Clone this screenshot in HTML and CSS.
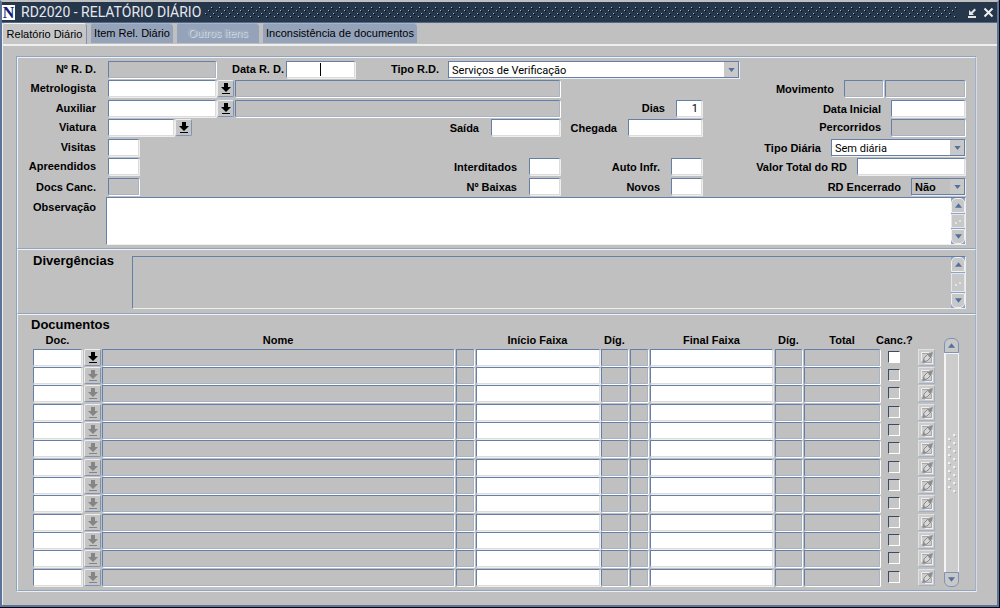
FILE: index.html
```html
<!DOCTYPE html>
<html lang="pt-BR">
<head>
<meta charset="utf-8">
<title>RD2020 - RELATÓRIO DIÁRIO</title>
<link rel="stylesheet" href="styles.css">
</head>
<body>
<svg class="defs" aria-hidden="true">
  <symbol id="lov" viewBox="0 0 10 12"><path d="M3 0h4v4h3L5 9 0 4h3zM1 10h8v1H1z" fill="currentColor"/></symbol>
  <symbol id="down" viewBox="0 0 8 5"><path d="M0 0h8L4 5z" fill="currentColor"/></symbol>
  <symbol id="up" viewBox="0 0 8 5"><path d="M0 5h8L4 0z" fill="currentColor"/></symbol>
  <symbol id="pencil" viewBox="0 0 14 14">
    <path d="M1 1h8v1H2v8H1zM12 6h1v7H5v-1h7z" fill="#eee"/>
    <path d="M2 2.500h6M11.500 7v4.500H4" fill="none" stroke="#a8a8a8"/>
    <path d="M3 11l1-4 4-4 3 3-4 4z" fill="#d8d8d8" stroke="#8c8c8c"/>
    <path d="M7 3l6-2-2 6-2-1-1-2zM2 12l4-1-2-3z" fill="#8c8c8c"/>
  </symbol>
</svg>
<div class="window">
  <header class="titlebar">
    <span class="logo" aria-hidden="true">N</span>
    <h1 class="title">RD2020 - RELATÓRIO DIÁRIO</h1>
    <svg class="grip" aria-hidden="true">
      <defs><pattern id="dots" width="8" height="12" patternUnits="userSpaceOnUse">
        <path d="M6 0h1v1H6zM3 3h1v1H3zM0 6h1v1H0zM5 9h1v1H5z" fill="#a7b5c7"/>
        <path d="M7 1h1v1H7zM4 4h1v1H4zM1 7h1v1H1zM6 10h1v1H6z" fill="#03080f"/>
      </pattern></defs>
      <rect width="100%" height="11" fill="url(#dots)"/>
    </svg>
    <button class="winbtn" aria-label="Minimizar"><svg width="11" height="11" viewBox="0 0 11 11"><path d="M1 9h8v2H1zM2 3v5h5L5.500 6.500 9 3 7.500 1.500 4 5z" fill="#e4e4e4"/></svg></button>
    <button class="winbtn" aria-label="Fechar"><svg width="11" height="11" viewBox="0 0 11 11"><path d="M1.500 1.500l8 8M9.500 1.500l-8 8" stroke="#f0f0f0" stroke-width="2"/></svg></button>
  </header>

  <nav class="tabs" role="tablist">
    <button class="tab tab-active" role="tab" aria-selected="true">Relatório Diário</button>
    <button class="tab" role="tab">Item Rel. Diário</button>
    <button class="tab tab-off" role="tab" disabled>Outros itens</button>
    <button class="tab tab-long" role="tab">Inconsistência de documentos</button>
  </nav>

  <main class="page">
    <div class="frame">
      <section class="block form">
        <div class="row">
          <label for="rd">Nº R. D.</label>
          <div class="wide">
            <input id="rd" class="field ro w-code" readonly>
            <label class="lbl-date" for="data">Data R. D.</label>
            <span class="datebox"><input id="data" class="field w-date"><i class="caret"></i></span>
            <label class="lbl-type" for="tipo">Tipo R.D.</label>
            <span class="combo w-type"><select id="tipo"><option>Serviços de Verificação</option></select><svg><use href="#down"/></svg></span>
          </div>
        </div>
        <div class="row">
          <label for="met">Metrologista</label>
          <div class="main"><input id="met" class="field w-code"><button class="lov" aria-label="Lista de metrologistas"><svg><use href="#lov"/></svg></button><input class="field ro grow" readonly aria-label="Nome do metrologista"></div>
          <div class="side"><label class="low" for="mov">Movimento</label><input id="mov" class="field ro w-mov" readonly><input class="field ro w-movname" readonly aria-label="Descrição do movimento"></div>
        </div>
        <div class="row">
          <label for="aux">Auxiliar</label>
          <div class="main"><input id="aux" class="field w-code"><button class="lov" aria-label="Lista de auxiliares"><svg><use href="#lov"/></svg></button><input class="field ro grow" readonly aria-label="Nome do auxiliar"></div>
          <div class="mid"><label for="dias">Dias</label><input id="dias" class="field num w-days" value="1"></div>
          <div class="side"><label class="low" for="ini">Data Inicial</label><input id="ini" class="field w-km"></div>
        </div>
        <div class="row">
          <label for="via">Viatura</label>
          <div class="main"><input id="via" class="field w-car"><button class="lov" aria-label="Lista de viaturas"><svg><use href="#lov"/></svg></button><label class="push low" for="sai">Saída</label><input id="sai" class="field w-date"></div>
          <div class="mid"><label class="low" for="che">Chegada</label><input id="che" class="field w-km"></div>
          <div class="side"><label for="per">Percorridos</label><input id="per" class="field ro w-km" readonly></div>
        </div>
        <div class="row">
          <label for="vis">Visitas</label>
          <div class="main"><input id="vis" class="field w-qty"></div>
          <div class="side"><label class="low" for="dia">Tipo Diária</label><span class="combo w-daily"><select id="dia"><option>Sem diária</option></select><svg><use href="#down"/></svg></span></div>
        </div>
        <div class="row">
          <label for="apr">Apreendidos</label>
          <div class="main"><input id="apr" class="field w-qty"><label class="push low" for="int">Interditados</label><input id="int" class="field w-qty"></div>
          <div class="mid"><label class="low" for="aut">Auto Infr.</label><input id="aut" class="field w-qty"></div>
          <div class="side"><label class="low" for="val">Valor Total do RD</label><input id="val" class="field w-code"></div>
        </div>
        <div class="row">
          <label class="low" for="can">Docs Canc.</label>
          <div class="main"><input id="can" class="field ro w-qty" readonly><label class="push low" for="bai">Nº Baixas</label><input id="bai" class="field w-qty"></div>
          <div class="mid"><label class="low" for="nov">Novos</label><input id="nov" class="field w-qty"></div>
          <div class="side"><label class="low" for="enc">RD Encerrado</label><span class="combo combo-off w-closed"><select id="enc"><option>Não</option></select><svg><use href="#down"/></svg></span></div>
        </div>
        <div class="notes">
          <label for="obs">Observação</label>
          <div class="memo memo-obs"><textarea id="obs"></textarea><div class="bar"><button aria-label="Subir"><svg><use href="#up"/></svg></button><span class="thumb"><i></i><i></i></span><button aria-label="Descer"><svg><use href="#down"/></svg></button></div></div>
        </div>
      </section>

      <section class="block diverg">
        <label class="heading" for="div">Divergências</label>
        <div class="memo memo-off"><textarea id="div" readonly></textarea><div class="bar"><button aria-label="Subir"><svg><use href="#up"/></svg></button><span class="thumb"><i></i><i></i></span><button aria-label="Descer"><svg><use href="#down"/></svg></button></div></div>
      </section>

      <section class="block docs">
        <h2 class="heading">Documentos</h2>
        <div class="docs-body">
          <table class="grid">
            <colgroup><col class="c-doc"><col class="c-lov"><col><col class="c-flag"><col class="c-range"><col class="c-dig"><col class="c-flag"><col class="c-range"><col class="c-dig"><col class="c-total"><col class="c-check"><col class="c-edit"></colgroup>
            <thead><tr><th>Doc.</th><td></td><th>Nome</th><td></td><th>Início Faixa</th><th>Díg.</th><td></td><th>Final Faixa</th><th>Díg.</th><th>Total</th><th class="h-canc">Canc.?</th><td></td></tr></thead>
            <tbody id="rows">
              <tr>
                <td><input class="field" aria-label="Doc."></td>
                <td class="tight"><button class="lov" aria-label="Lista de documentos"><svg><use href="#lov"/></svg></button></td>
                <td><input class="field ro" readonly aria-label="Nome"></td>
                <td><input class="field ro" readonly aria-label="Série inicial"></td>
                <td class="tight"><input class="field" aria-label="Início Faixa"></td>
                <td><input class="field ro" readonly aria-label="Dígito inicial"></td>
                <td><input class="field ro" readonly aria-label="Série final"></td>
                <td><input class="field" aria-label="Final Faixa"></td>
                <td><input class="field ro" readonly aria-label="Dígito final"></td>
                <td><input class="field ro" readonly aria-label="Total"></td>
                <td class="c-check"><input type="checkbox" class="tick" aria-label="Cancelado"></td>
                <td class="tight"><button class="edit" disabled aria-label="Editar"><svg><use href="#pencil"/></svg></button></td>
              </tr>
            </tbody>
          </table>
          <div class="scroll"><button class="cap-top" aria-label="Subir"><svg><use href="#up"/></svg></button>
            <div class="track"><svg width="10" height="60" aria-hidden="true"><defs><pattern id="bumps" width="10" height="8" patternUnits="userSpaceOnUse"><circle cx="2" cy="6" r="1" fill="#fff"/><circle cx="7" cy="2" r="1" fill="#fff"/><path d="M3 7h1v1H3zM8 3h1v1H8z" fill="#9a9fa8"/></pattern></defs><rect width="10" height="60" fill="url(#bumps)"/></svg></div>
            <button class="cap-bottom" aria-label="Descer"><svg><use href="#down"/></svg></button></div>
        </div>
      </section>
    </div>
  </main>
</div>
<script src="rows.js"></script>
</body>
</html>
```
FILE: rows.js
```js
const body = document.getElementById('rows');
const first = body.rows[0];
for (let i = 1; i < 13; i++) {
  const row = first.cloneNode(true);
  row.querySelector('.lov').disabled = true;
  row.querySelector('.tick').disabled = true;
  body.appendChild(row);
}
```
FILE: styles.css
```css
* { box-sizing: border-box; }
body {
  margin: 0;
  background: #05080f;
  font: 11px/13px Roboto, "Liberation Sans", sans-serif;
  color: #000;
}
button, input, select, textarea { font: inherit; color: inherit; margin: 0; padding: 0; }
button { display: flex; align-items: center; justify-content: center; }
.defs { position: absolute; width: 0; height: 0; }
label, th { font: bold 11px/13px "Liberation Sans", sans-serif; white-space: nowrap; }

.window {
  margin: 0 1px 1px 0;
  border: 2px solid #5b7398;
  border-top-color: #c0c0c0;
  background: #c0c0c0;
}
.titlebar {
  display: flex;
  align-items: center;
  height: 21px;
  padding-right: 1px;
  background: #26364b;
  border-bottom: 1px solid #54698a;
}
.logo {
  width: 13px;
  height: 15px;
  background: #fff;
  color: #101a78;
  font: bold 16px/15px "Liberation Serif", serif;
  text-align: center;
}
.title { margin: 0 4px 0 6px; color: #e6e9ee; font-size: 14px; line-height: 20px; font-weight: 400; white-space: nowrap; }
.grip { flex: 1; height: 11px; margin-right: 7px; min-width: 0; }
.winbtn { width: 16px; height: 16px; background: none; border: 0; }

.tabs { display: flex; gap: 4px; height: 21px; border-left: 1px solid #eee; }
.tab {
  width: 82px;
  height: 20px;
  padding: 0;
  border: 0;
  border-top: 1px solid #a6b4c8;
  border-radius: 2px 4px 0 0;
  background: #94a3b9;
  font-family: "Liberation Sans", sans-serif;
  white-space: nowrap;
}
.tab-active {
  width: 84px;
  height: 21px;
  background: #c6c6c6;
  border-top: 1px solid #f2f2f2;
  border-right: 1px solid #7f93b0;
}
.tab-off { color: #94a3b9; text-shadow: 1px 1px 0 #d3dae4, 0 0 1px #dfe5ee; }
.tab-long { width: 154px; }

.page {
  padding: 10px 20px 13px 13px;
  border-left: 1px solid #eee;
  border-top: 2px solid #eee;
}
.frame { border: 1px solid #8fa4c0; border-right-color: #d5dce6; border-bottom-color: #eee; }
.block { border: 1px solid #f2f2f2; border-right-color: #9fb0c8; border-bottom-color: #8fa4c0; }

.form { padding: 3px 10px 3px 10px; }
.row {
  display: grid;
  grid-template-columns: 68px 1fr 142px 263px;
  align-items: center;
  height: 17px;
  margin-bottom: 2px;
}
.row:nth-child(even) { margin-bottom: 3px; }
.row > label { grid-column: 1; text-align: right; }
.main, .mid, .side, .wide { display: flex; align-items: center; height: 17px; }
.main, .wide { padding-left: 12px; }
.main { grid-column: 2; gap: 1px; }
.mid { grid-column: 3; justify-content: flex-end; gap: 11px; }
.side { grid-column: 4; justify-content: flex-end; gap: 2px; }
.side label { margin-right: 8px; }
.wide { grid-column: 2 / -1; }
.push { margin: 0 11px 0 auto; }
.low { padding-top: 2px; }
.lbl-date { margin: 0 2px 0 16px; }
.lbl-type { margin: 0 9px 0 36px; }

.field {
  height: 17px;
  padding: 0 3px;
  border: 1px solid #6480a8;
  border-right-color: #dcdcdc;
  border-bottom-color: #dcdcdc;
  border-radius: 1px;
  background: #fff;
  box-shadow: 1px 1px 0 #eee;
  outline: 0;
  min-width: 0;
}
.ro { background: #c0c0c0; border-right-color: #a8b4c6; border-bottom-color: #a8b4c6; box-shadow: 1px 1px 0 #fff; }
.num { text-align: right; }
.grow { flex: 1; }
.w-code { width: 108px; }
.w-date { width: 69px; }
.w-km { width: 74px; }
.w-car { width: 66px; }
.w-qty { width: 31px; }
.w-days { width: 26px; }
.w-mov { width: 39px; }
.w-movname { width: 80px; }
.w-type { width: 291px; }
.w-daily { width: 134px; }
.w-closed { width: 54px; }
.datebox { position: relative; display: flex; }
.caret { position: absolute; left: 34px; top: 2px; width: 1px; height: 13px; background: #000; }

.combo { position: relative; display: flex; height: 17px; }
.combo select {
  appearance: none;
  width: 100%;
  padding: 2px 16px 0 3px;
  border: 1px solid #6480a8;
  border-radius: 0;
  background: linear-gradient(#c8c8c8, #c8c8c8) right / 14px 100% no-repeat #fff;
  box-shadow: 1px 1px 0 #eee;
}
.combo svg { position: absolute; right: 4px; top: 7px; width: 7px; height: 4px; color: #52719d; pointer-events: none; }
.combo-off select { background-color: #c0c0c0; font: bold 11px/13px "Liberation Sans", sans-serif; }

.lov {
  width: 17px;
  height: 17px;
  border: 1px solid #eee;
  border-right-color: #7f94b4;
  border-bottom-color: #7f94b4;
  border-radius: 2px;
  background: #c4c4c4;
}
.lov svg { width: 10px; height: 12px; color: #000; }
.lov:disabled svg { color: #858585; }

.notes { display: flex; gap: 10px; }
.notes label { width: 68px; padding-top: 4px; text-align: right; }
.memo {
  display: flex;
  flex: 1;
  border: 1px solid #6480a8;
  border-right-color: #eee;
  border-bottom-color: #eee;
  background: #fff;
}
.memo textarea { flex: 1; min-width: 0; border: 0; resize: none; background: none; outline: 0; }
.memo-obs { height: 48px; margin-right: -1px; }
.memo-off { height: 53px; background: #c0c0c0; }
.bar { display: flex; flex-direction: column; width: 14px; background: #8fa4c0; }
.bar button { height: 15px; border: 1px solid #eef1f5; background: #c8c8c8; }
.bar button:first-child { border-radius: 5px 5px 0 0; }
.bar button:last-child { border-radius: 0 0 5px 5px; }
.bar svg, .scroll button svg { width: 7px; height: 5px; color: #52719d; }
.thumb { flex: 1; margin: 1px 0; border: 1px solid #e3e6ea; background: #c8c8c8; display: flex; align-items: center; justify-content: center; gap: 2px; }
.thumb i { width: 2px; height: 2px; background: #eee; border-radius: 1px; }
.thumb i:first-child { margin-top: 4px; }

.diverg { display: flex; gap: 18px; padding: 6px 9px 4px 15px; }
.heading { margin: 0; font: bold 13px/15px "Liberation Sans", sans-serif; }
.diverg .heading { margin-top: -3px; width: 81px; }

.docs { padding: 2px 16px 3px 15px; }
.docs .heading { margin-left: -2px; }
.docs-body { display: flex; gap: 8px; }
.grid { flex: 1; table-layout: fixed; width: 100%; border-collapse: collapse; }
.grid th { height: 17px; padding: 0 2px 0 0; text-align: center; vertical-align: middle; }
.grid td { height: 18px; padding: 0 2px 0 0; vertical-align: top; }
.grid thead td { height: 17px; }
.grid tbody tr:nth-child(3n) td { height: 19px; }
.grid .tight { padding-right: 1px; }
.grid .field { display: block; width: 100%; height: 17px; }
.c-doc { width: 51px; }
.c-lov { width: 18px; }
.c-flag { width: 20px; }
.c-range { width: 125px; }
.c-dig { width: 29px; }
.c-total { width: 78px; }
.c-check { width: 36px; }
.c-edit { width: 18px; }
.grid .h-canc { padding: 0; text-align: left; text-indent: -6px; }
.tick {
  appearance: none;
  display: block;
  width: 12px;
  height: 12px;
  margin: 2px 0 0 6px;
  border: 1px solid #3b4b63;
  border-right-color: #fff;
  border-bottom-color: #fff;
  background: #fff;
}
.tick:disabled { background: #c6c6c6; }
.edit {
  width: 17px;
  height: 17px;
  border: 1px solid #e2e2e2;
  border-right-color: #9fb0c8;
  border-bottom-color: #9fb0c8;
  border-radius: 1px;
  background: #ccc;
}
.edit svg { width: 14px; height: 14px; flex: none; }

.scroll { display: flex; flex-direction: column; width: 15px; margin-top: 6px; }
.scroll button { height: 15px; border: 1px solid #7f94b4; background: #c8c8c8; }
.cap-top { border-radius: 6px 6px 0 0; }
.cap-bottom { border-radius: 0 0 6px 6px; }
.track { flex: 1; display: flex; align-items: center; justify-content: center; border: solid #f4f4f4; border-width: 1px 1px 0 2px; background: #ccc; }
```
